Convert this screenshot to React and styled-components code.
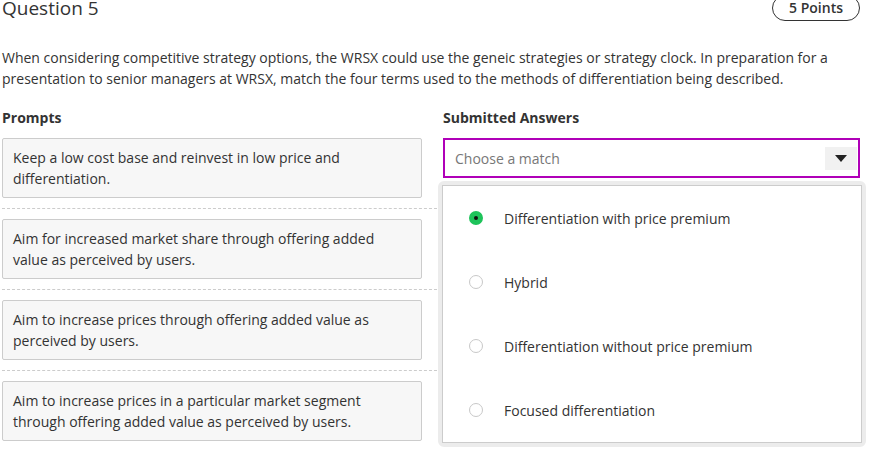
import React from 'react'
import styled, { createGlobalStyle } from 'styled-components'

const prompts = [
  'Keep a low cost base and reinvest in low price and differentiation.',
  'Aim for increased market share through offering added value as perceived by users.',
  'Aim to increase prices through offering added value as perceived by users.',
  'Aim to increase prices in a particular market segment through offering added value as perceived by users.',
]

const options = [
  'Differentiation with price premium',
  'Hybrid',
  'Differentiation without price premium',
  'Focused differentiation',
]

export default function App() {
  return (
    <>
      <Global />
      <Page>
        <Header>
          <Title>Question 5</Title>
          <Points>5 Points</Points>
        </Header>
        <Intro>
          When considering competitive strategy options, the WRSX could use the geneic strategies or strategy clock. In preparation for a presentation to senior managers at WRSX, match the four terms used to the methods of differentiation being described.
        </Intro>
        <Columns>
          <div>
            <ColHead>Prompts</ColHead>
            {prompts.map((p, i) => (
              <PromptRow key={i} last={i === prompts.length - 1}>
                <PromptBox>{p}</PromptBox>
              </PromptRow>
            ))}
          </div>
          <Right>
            <ColHead>Submitted Answers</ColHead>
            <SelectWrap>
              <Select>
                <Placeholder>Choose a match</Placeholder>
                <ArrowBox>
                  <Triangle />
                </ArrowBox>
              </Select>
              <Menu>
                <MenuPanel>
                  {options.map((o, i) => (
                    <Option key={o}>
                      <Radio checked={i === 0} />
                      <span>{o}</span>
                    </Option>
                  ))}
                </MenuPanel>
              </Menu>
            </SelectWrap>
          </Right>
        </Columns>
      </Page>
    </>
  )
}

const Global = createGlobalStyle`
  body {
    margin: 0;
    background: #fff;
    font-family: "Open Sans", "Liberation Sans", sans-serif;
    color: #333;
  }
`

const Page = styled.div`
  width: 876px;
  min-height: 472px;
  box-sizing: border-box;
  padding: 0 16px 0 2px;
  overflow: hidden;
`

const Header = styled.div`
  display: flex;
  justify-content: space-between;
  align-items: center;
  margin-top: -5px;
  height: 26px;
`

const Title = styled.h2`
  margin: 0;
  font-size: 19px;
  font-weight: 400;
  line-height: 26px;
  color: #333;
`

const Points = styled.div`
  height: 26px;
  box-sizing: border-box;
  border: 1px solid #333;
  border-radius: 13px;
  padding: 0 16px;
  font-size: 14px;
  font-weight: 600;
  line-height: 24px;
`

const Intro = styled.p`
  margin: 26px 0 0;
  font-size: 14px;
  line-height: 21px;
`

const Columns = styled.div`
  display: grid;
  grid-template-columns: 440px 1fr;
  margin-top: 18px;
`

const ColHead = styled.div`
  font-size: 14px;
  font-weight: 700;
  line-height: 21px;
  margin-bottom: 10px;
`

const PromptRow = styled.div`
  padding-bottom: ${p => (p.last ? '0' : '10px')};
  margin-bottom: ${p => (p.last ? '0' : '10px')};
  border-bottom: ${p => (p.last ? 'none' : '1px dashed #ccc')};
`

const PromptBox = styled.div`
  width: 420px;
  height: 60px;
  box-sizing: border-box;
  padding: 8px 10px;
  background: #f7f7f7;
  border: 1px solid #ccc;
  border-radius: 2px;
  font-size: 14px;
  line-height: 21px;
`

const Right = styled.div`
  padding-left: 1px;
`

const SelectWrap = styled.div`
  position: relative;
`

const Select = styled.div`
  height: 40px;
  box-sizing: border-box;
  border: 2px solid #b000b8;
  display: flex;
  align-items: center;
  justify-content: space-between;
  padding: 0 0 0 10px;
`

const Placeholder = styled.span`
  font-size: 14px;
  color: #777;
`

const ArrowBox = styled.div`
  width: 32px;
  height: 23px;
  background: #f1f1f1;
  display: flex;
  align-items: center;
  justify-content: center;
  margin-right: 1px;
`

const Triangle = styled.div`
  width: 0;
  height: 0;
  border-left: 6px solid transparent;
  border-right: 6px solid transparent;
  border-top: 7px solid #222;
`

const Menu = styled.div`
  position: absolute;
  top: 43px;
  left: -5px;
  right: -6px;
  border: 4px solid #ececec;
  border-radius: 6px;
  background: #ececec;
`

const MenuPanel = styled.div`
  background: #fff;
  border: 1px solid #ccc;
`

const Option = styled.div`
  height: 64px;
  display: flex;
  align-items: center;
  padding-left: 26px;
  gap: 21px;
  font-size: 14px;
  color: #333;
`

const Radio = styled.span`
  width: 14px;
  height: 14px;
  box-sizing: border-box;
  border-radius: 50%;
  flex-shrink: 0;
  border: ${p => (p.checked ? '5px solid #1ec35a' : '1px solid #c8c8c8')};
  background: ${p => (p.checked ? '#111' : '#fff')};
`
